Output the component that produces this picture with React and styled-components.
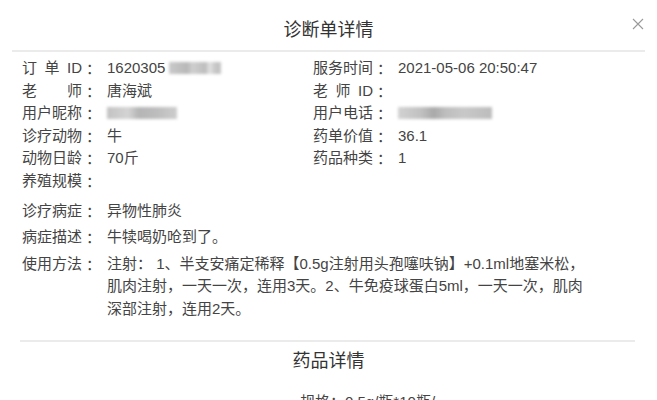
import React from 'react';
import styled, { createGlobalStyle } from 'styled-components';

const GlobalStyle = createGlobalStyle`
  body {
    margin: 0;
    background: #fff;
    font-family: "Liberation Sans", "Noto Sans CJK SC", sans-serif;
    color: #444;
  }
`;

const Modal = styled.div`
  width: 657px;
  height: 400px;
  overflow: hidden;
  background: #fff;
`;

const Header = styled.div`
  height: 50px;
  display: grid;
  grid-template-columns: 1fr auto 1fr;
`;

const SubHeader = styled.div`
  display: flex;
  justify-content: center;
`;

const Title = styled.h2`
  margin: 0;
  padding-top: ${(p) => p.$top || 18}px;
  font-size: 18px;
  line-height: 24px;
  font-weight: 400;
  color: #333;
`;

const HeaderTitle = styled(Title)`
  grid-column: 2;
`;

const Close = styled.button`
  grid-column: 3;
  justify-self: end;
  align-self: start;
  margin: 18px 13px 0 0;
  padding: 0;
  border: none;
  background: none;
  width: 12px;
  height: 12px;
  display: flex;
`;

const Divider = styled.div`
  height: 2px;
  background: #ebebeb;
  margin: ${(p) => p.$margin};
`;

const InfoGrid = styled.div`
  display: grid;
  grid-template-columns: 291px 1fr;
  padding: 5px 22px 0;
`;

const Column = styled.div`
  display: flex;
  flex-direction: column;
`;

const Row = styled.div`
  display: flex;
  align-items: flex-start;
  font-size: 15px;
  line-height: 22.6px;
  margin-top: ${(p) => p.$gap || 0}px;
`;

const Wide = styled.div`
  padding: 0 22px;
`;

const Label = styled.span`
  width: 60px;
  flex: none;
  text-align: justify;
  text-align-last: justify;
  white-space: nowrap;
  color: #444;
`;

const Colon = styled.span`
  width: 15px;
  flex: none;
  padding-left: 4px;
  box-sizing: border-box;
  font-family: "Noto Sans CJK SC", sans-serif;
`;

const Value = styled.span`
  padding-left: 10px;
  color: #444;
  display: flex;
  align-items: center;
  min-height: 22.6px;
`;

const Lines = styled.div`
  padding-left: 10px;
  color: #444;
  white-space: nowrap;
`;

const Blur = styled.span`
  display: inline-block;
  width: ${(p) => p.$w}px;
  height: 12px;
  margin-left: ${(p) => p.$ml || 0}px;
  background: ${(p) => p.$bg};
  filter: blur(1.8px);
`;

const DrugRow = styled.div`
  padding: 18px 0 0 300px;
  font-size: 15px;
  line-height: 22px;
  color: #444;
  white-space: nowrap;
`;

const Field = ({ label, children, gap }) => (
  <Row $gap={gap}>
    <Label>{label}</Label>
    <Colon>：</Colon>
    <Value>{children}</Value>
  </Row>
);

const idBlur = 'linear-gradient(90deg, #c9c9c9 0%, #b8b8b8 35%, #cfcfcf 45%, #bdbdbd 70%, #e2e2e2 78%, #c4c4c4 90%)';
const nickBlur = 'linear-gradient(90deg, #c2c2c2 0%, #d4d4d4 30%, #b5b5b5 45%, #bcbcbc 70%, #cdcdcd 100%)';
const phoneBlur = 'linear-gradient(90deg, #d2d2d2 0%, #c0c0c0 25%, #a9a9a9 38%, #bdbdbd 50%, #c8c8c8 70%, #bcbcbc 100%)';

export default function App() {
  return (
    <>
      <GlobalStyle />
      <Modal>
        <Header>
          <HeaderTitle>诊断单详情</HeaderTitle>
          <Close aria-label="close">
            <svg width="12" height="12" viewBox="0 0 12 12">
              <path d="M1 1 L11 11 M11 1 L1 11" stroke="#9a9a9a" strokeWidth="1.1" fill="none" />
            </svg>
          </Close>
        </Header>
        <Divider $margin="0 12px 0 12px" />
        <InfoGrid>
          <Column>
            <Field label="订 单 ID">
              1620305
              <Blur $w={52} $ml={4} $bg={idBlur} />
            </Field>
            <Field label="老 师">唐海斌</Field>
            <Field label="用户昵称">
              <Blur $w={70} $bg={nickBlur} />
            </Field>
            <Field label="诊疗动物">牛</Field>
            <Field label="动物日龄">70斤</Field>
            <Field label="养殖规模" />
          </Column>
          <Column>
            <Field label="服务时间">2021-05-06 20:50:47</Field>
            <Field label="老 师 ID" />
            <Field label="用户电话">
              <Blur $w={94} $bg={phoneBlur} />
            </Field>
            <Field label="药单价值">36.1</Field>
            <Field label="药品种类">1</Field>
          </Column>
        </InfoGrid>
        <Wide>
          <Field label="诊疗病症" gap={7}>异物性肺炎</Field>
          <Field label="病症描述" gap={4}>牛犊喝奶呛到了。</Field>
          <Row $gap={4}>
            <Label>使用方法</Label>
            <Colon>：</Colon>
            <Lines>
              注射： 1、半支安痛定稀释【0.5g注射用头孢噻呋钠】+0.1ml地塞米松，
              <br />
              肌肉注射，一天一次，连用3天。2、牛免疫球蛋白5ml，一天一次，肌肉
              <br />
              深部注射，连用2天。
            </Lines>
          </Row>
        </Wide>
        <Divider $margin="19px 22px 0 20px" />
        <SubHeader>
          <Title $top={7}>药品详情</Title>
        </SubHeader>
        <DrugRow>规格：0.5g/瓶*10瓶/</DrugRow>
      </Modal>
    </>
  );
}
